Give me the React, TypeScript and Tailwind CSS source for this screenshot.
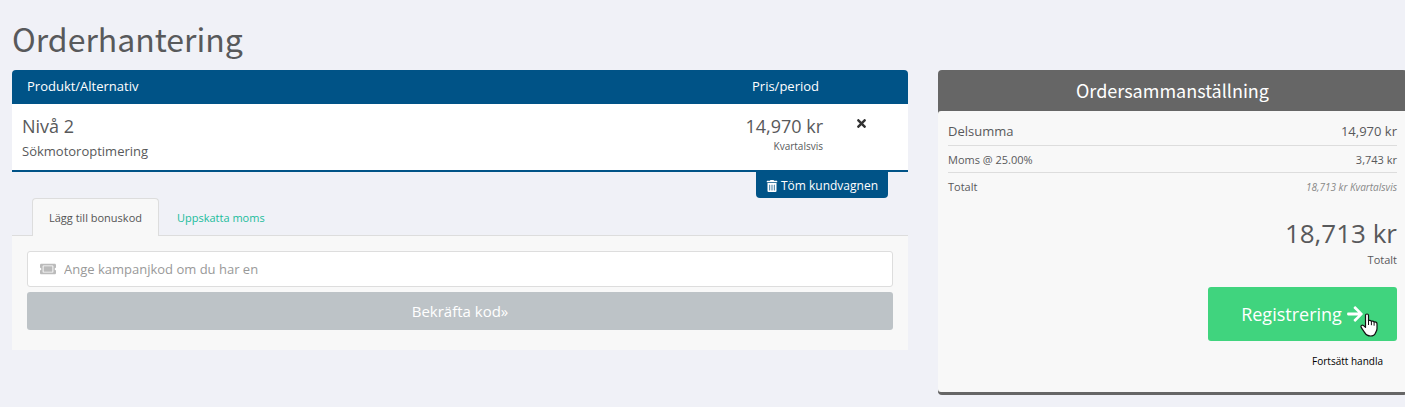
import React, { useState } from 'react';
import { FaArrowRight, FaTicketAlt, FaTimes, FaTrashAlt } from 'react-icons/fa';

type CartItem = {
  id: number;
  name: string;
  group: string;
  price: string;
  period: string;
};

const items: CartItem[] = [
  { id: 1, name: 'Nivå 2', group: 'Sökmotoroptimering', price: '14,970 kr', period: 'Kvartalsvis' },
];

function HandPointer() {
  return (
    <svg viewBox="0 0 18 24" className="pointer-events-none absolute top-[26px] right-[19px] h-6 w-[18px]" aria-hidden="true">
      <path
        d="M5.5 2.6c0-1 .6-1.6 1.5-1.6s1.5.6 1.5 1.6v5.2c.2-.6 2.6-.6 2.9.6.5-.6 2.4-.4 2.7.7.9-.5 2.9 0 2.9 1.6v4.8c0 2-.8 3-1.4 4.1-.4.9-.8 3.4-5 3.4-3.4 0-4.6-1.1-5.7-3.1-.9-1.6-3.3-4.4-3.8-5.9-.5-1.3.9-2.5 2.2-1.6l2.200 2z"
        fill="#fff"
        stroke="#111"
        strokeWidth="1.2"
        strokeLinejoin="round"
      />
      <path d="M8.5 7.5v4.5M11.4 8.4v3.8M14.1 9.1v3.6" stroke="#111" strokeWidth="1" fill="none" />
    </svg>
  );
}

function CartTable() {
  return (
    <table className="w-full table-fixed border-separate border-spacing-0 overflow-hidden rounded-t">
      <thead className="bg-[#005387] text-[13px] leading-8 text-white">
        <tr>
          <th className="pb-0.5 pl-[15px] text-left font-normal">Produkt/Alternativ</th>
          <th className="w-40 pr-1 pb-0.5 text-right font-normal">Pris/period</th>
          <td className="w-[85px]" />
        </tr>
      </thead>
      <tbody className="bg-white">
        {items.map((item) => (
          <tr key={item.id} className="align-top">
            <td className="border-b-2 border-[#005387] pt-2 pb-2 pl-2.5">
              <div className="text-lg leading-7">{item.name}</div>
              <div className="text-[13px] leading-[22px]">{item.group}</div>
            </td>
            <td className="border-b-2 border-[#005387] pt-2 text-right">
              <div className="text-lg leading-7">{item.price}</div>
              <div className="text-[10px] leading-3">{item.period}</div>
            </td>
            <td className="border-b-2 border-[#005387] pt-[13px] pl-8">
              <button type="button" aria-label="Ta bort" className="block text-[#333]">
                <FaTimes className="size-[13px]" />
              </button>
            </td>
          </tr>
        ))}
      </tbody>
    </table>
  );
}

function CodePanel() {
  const [code, setCode] = useState('');

  return (
    <div>
      <div className="relative z-10 -mb-px flex px-5 text-[11px] leading-4">
        <button type="button" className="rounded-t border border-b-0 border-[#ddd] bg-[#f8f8f8] px-4 pt-[11px] pb-2.5 text-[#555]">Lägg till bonuskod</button>
        <button type="button" className="px-[18px] pt-[11px] pb-2.5 text-[#1abc9c]">Uppskatta moms</button>
      </div>
      <form className="flex flex-col gap-[5px] border-t border-[#ddd] bg-[#f8f8f8] px-[15px] pt-[15px] pb-5" onSubmit={(e) => e.preventDefault()}>
        <label className="relative block">
          <FaTicketAlt className="absolute top-2.5 left-[13px] size-4 text-[#bbb]" />
          <input
            value={code}
            onChange={(e) => setCode(e.target.value)}
            placeholder="Ange kampanjkod om du har en"
            aria-label="Ange kampanjkod om du har en"
            className="block h-9 w-full rounded-[3px] border border-[#ddd] bg-white pl-9 text-[13px] placeholder:text-[#999]"
          />
        </label>
        <button type="submit" className="h-[38px] rounded-[3px] bg-[#bdc3c7] text-[15px] text-white">Bekräfta kod»</button>
      </form>
    </div>
  );
}

function OrderSummary() {
  return (
    <aside className="rounded border-b-[3px] border-[#666] bg-[#666]">
      <h2 className="text-center font-['Noto_Sans_CJK_SC',sans-serif] text-lg leading-[41px] text-white">Ordersammanställning</h2>
      <div className="rounded-[3px] bg-[#f8f8f8] px-2.5 pt-2 pb-[22px]">
        <dl className="text-[11px]">
          <div className="flex justify-between border-b border-[#ddd] pt-0.5 pb-1 text-[13px] leading-5">
            <dt>Delsumma</dt>
            <dd>14,970 kr</dd>
          </div>
          <div className="flex justify-between border-b border-[#ddd] pt-[5px] pb-[3px] leading-[18px]">
            <dt>Moms @ 25.00%</dt>
            <dd>3,743 kr</dd>
          </div>
          <div className="flex justify-between py-[5px] leading-[18px]">
            <dt>Totalt</dt>
            <dd className="text-[10px] text-[#888] italic">18,713 kr Kvartalsvis</dd>
          </div>
        </dl>
        <div className="mt-3.5 text-right">
          <div className="text-[26px] leading-9">18,713 kr</div>
          <div className="text-[11px] leading-[18px]">Totalt</div>
        </div>
        <div className="mt-[18px] flex flex-col items-end">
          <button type="button" className="relative flex h-[54px] w-[189px] items-center justify-center gap-1 rounded-[3px] bg-[#40d47e] text-lg text-white">
            Registrering
            <FaArrowRight className="size-[18px]" />
            <HandPointer />
          </button>
          <a href="#shop" className="mt-[11px] mr-3.5 text-[10px] leading-[18px] text-black">Fortsätt handla</a>
        </div>
      </div>
    </aside>
  );
}

export default function App() {
  return (
    <main className="min-h-screen overflow-hidden bg-[#f0f1f7] pt-[18px] pl-3 font-['Open_Sans',sans-serif] text-[#58595b]">
      <h1 className="font-['Noto_Sans_CJK_SC',sans-serif] text-[32px] leading-[40px]">Orderhantering</h1>
      <div className="-mr-0.5 mt-3 grid grid-cols-[896fr_469fr] items-start gap-[30px]">
        <section>
          <CartTable />
          <div className="flex justify-end pr-5">
            <button type="button" className="flex h-[26px] items-center gap-[3px] rounded-b bg-[#005387] px-2.5 pt-px text-xs text-white">
              <FaTrashAlt className="size-3" />
              Töm kundvagnen
            </button>
          </div>
          <CodePanel />
        </section>
        <OrderSummary />
      </div>
    </main>
  );
}
